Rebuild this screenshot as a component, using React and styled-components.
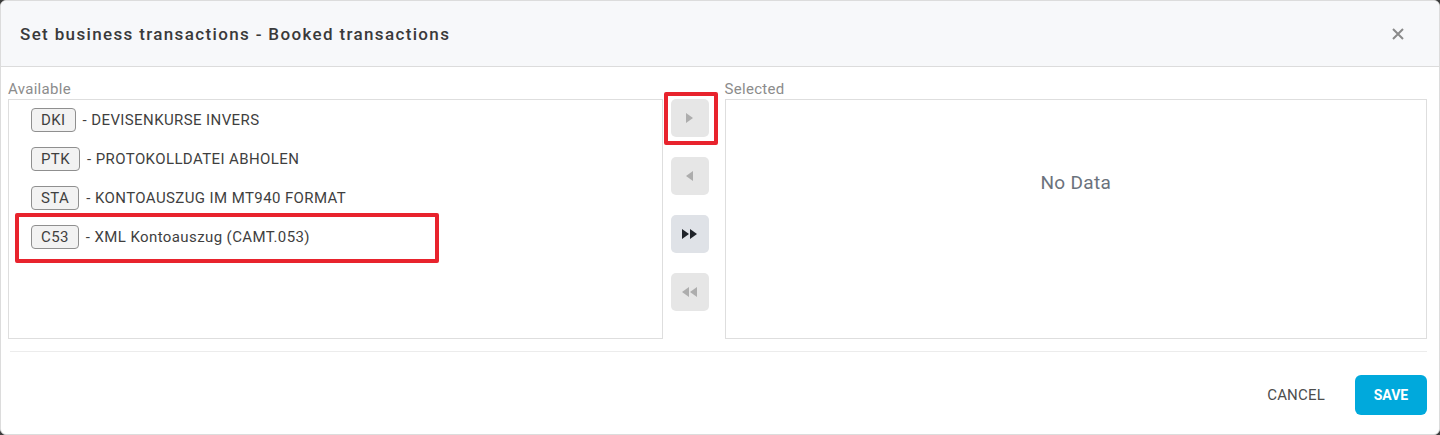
import React from 'react';
import styled, { createGlobalStyle } from 'styled-components';

const GlobalStyle = createGlobalStyle`
  html, body {
    margin: 0;
    padding: 0;
    background: #3c3c3c;
  }
  body {
    font-family: Roboto, 'Liberation Sans', sans-serif;
  }
`;

const Modal = styled.div`
  width: 1440px;
  height: 435px;
  box-sizing: border-box;
  background: #fff;
  border: 1px solid #dcdcdc;
  border-radius: 6px;
  overflow: hidden;
  display: flex;
  flex-direction: column;
`;

const Header = styled.div`
  height: 66px;
  flex: none;
  box-sizing: border-box;
  background: #f7f8fa;
  border-bottom: 1px solid #dcdcdc;
  display: flex;
  align-items: center;
  justify-content: space-between;
  padding: 0 35px 0 19px;
`;

const Title = styled.h2`
  margin: 0;
  font-size: 17px;
  font-weight: 500;
  letter-spacing: 1.35px;
  color: #3a3a3a;
`;

const Close = styled.button`
  border: none;
  background: none;
  padding: 0;
  color: #8a8a8a;
  display: flex;
  cursor: pointer;
`;

const Body = styled.div`
  display: flex;
  padding: 12px 12px 0 7px;
`;

const Column = styled.div`
  display: flex;
  flex-direction: column;
  width: ${(p) => p.$width}px;
`;

const Label = styled.div`
  font-size: 15px;
  letter-spacing: 0.3px;
  line-height: 20px;
  color: #8c8c8c;
  height: 20px;
`;

const ListBox = styled.div`
  position: relative;
  height: 240px;
  box-sizing: border-box;
  border: 1px solid #dedede;
`;

const Item = styled.div`
  height: 39px;
  display: flex;
  align-items: center;
  padding-left: 22px;
  gap: 7px;
  font-size: 15px;
  letter-spacing: 0.4px;
  color: #3f3f3f;
`;

const Chip = styled.span`
  height: 24px;
  box-sizing: border-box;
  padding: 0 9px;
  border: 1px solid #8f8f8f;
  border-radius: 4px;
  background: #f2f2f2;
  display: inline-flex;
  align-items: center;
  color: #3f3f3f;
`;

const Highlight = styled.div`
  position: absolute;
  box-sizing: border-box;
  border: 4px solid #e8232d;
  border-radius: 2px;
  left: ${(p) => p.$left}px;
  top: ${(p) => p.$top}px;
  width: ${(p) => p.$w}px;
  height: ${(p) => p.$h}px;
`;

const Transfer = styled.div`
  position: relative;
  width: 62px;
  box-sizing: border-box;
  padding: 20px 8px 0 0;
  display: flex;
  flex-direction: column;
  align-items: center;
  gap: 20px;
`;

const MoveButton = styled.button`
  width: 38px;
  height: 38px;
  border: none;
  border-radius: 5px;
  padding: 0;
  display: flex;
  align-items: center;
  justify-content: center;
  background: ${(p) => (p.disabled ? '#e6e6e6' : '#dfe2e7')};
  color: ${(p) => (p.disabled ? '#adadad' : '#1f2329')};
`;

const Empty = styled.div`
  height: 100%;
  display: flex;
  justify-content: center;
  padding-top: 71px;
  box-sizing: border-box;
  font-size: 19px;
  letter-spacing: 0.3px;
  color: #6b727c;
`;

const Divider = styled.div`
  margin: 12px 12px 0 9px;
  border-top: 1px solid #ececec;
`;

const Footer = styled.div`
  flex: 1;
  display: flex;
  align-items: center;
  justify-content: flex-end;
  gap: 30px;
  padding: 4px 12px 0 0;
`;

const TextButton = styled.button`
  border: none;
  background: none;
  font-family: inherit;
  font-size: 15px;
  color: #4d4d4d;
  letter-spacing: 0.2px;
  padding: 0;
`;

const PrimaryButton = styled.button`
  width: 72px;
  height: 40px;
  border: none;
  border-radius: 6px;
  background: #00a9dc;
  color: #fff;
  font-family: inherit;
  font-size: 14px;
  font-weight: 700;
`;

const Tri = ({ dir = 'right', double = false }) => {
  const one = dir === 'right' ? 'M0 0 L7 5 L0 10 Z' : 'M7 0 L0 5 L7 10 Z';
  const w = double ? 15 : 7;
  return (
    <svg width={w} height="10" viewBox={`0 0 ${w} 10`} fill="currentColor">
      <path d={one} />
      {double && <path d={one} transform="translate(8 0)" />}
    </svg>
  );
};

const items = [
  ['DKI', 'DEVISENKURSE INVERS'],
  ['PTK', 'PROTOKOLLDATEI ABHOLEN'],
  ['STA', 'KONTOAUSZUG IM MT940 FORMAT'],
  ['C53', 'XML Kontoauszug (CAMT.053)']
];

export default function App() {
  return (
    <>
      <GlobalStyle />
      <Modal>
        <Header>
          <Title>Set business transactions - Booked transactions</Title>
          <Close aria-label="close">
            <svg width="12" height="12" viewBox="0 0 12 12" stroke="currentColor" strokeWidth="2">
              <path d="M1 1 L11 11 M11 1 L1 11" />
            </svg>
          </Close>
        </Header>
        <Body>
          <Column $width={655}>
            <Label>Available</Label>
            <ListBox>
              {items.map(([code, name]) => (
                <Item key={code}>
                  <Chip>{code}</Chip>
                  <span>- {name}</span>
                </Item>
              ))}
              <Highlight $left={6} $top={113} $w={424} $h={50} />
            </ListBox>
          </Column>
          <Transfer>
            <MoveButton disabled>
              <Tri dir="right" />
            </MoveButton>
            <MoveButton disabled>
              <Tri dir="left" />
            </MoveButton>
            <MoveButton>
              <Tri dir="right" double />
            </MoveButton>
            <MoveButton disabled>
              <Tri dir="left" double />
            </MoveButton>
            <Highlight $left={1} $top={13} $w={54} $h={53} />
          </Transfer>
          <Column $width={703}>
            <Label>Selected</Label>
            <ListBox>
              <Empty>No Data</Empty>
            </ListBox>
          </Column>
        </Body>
        <Divider />
        <Footer>
          <TextButton>CANCEL</TextButton>
          <PrimaryButton>SAVE</PrimaryButton>
        </Footer>
      </Modal>
    </>
  );
}
